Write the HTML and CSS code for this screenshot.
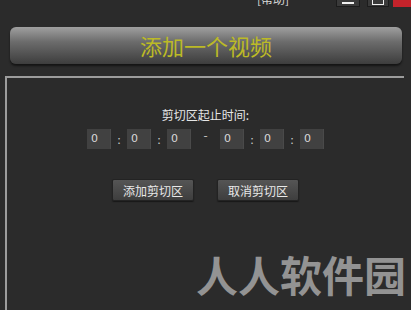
FILE: index.html
```html
<!DOCTYPE html>
<html>
<head>
  <title>添加一个视频</title>
  <link rel="stylesheet" href="styles.css">
</head>
<body>
  <div class="topBar">
    <span class="helpLink">[帮助]</span>
    <div class="winBtn minBtn"><span></span></div>
    <div class="winBtn maxBtn"><span></span></div>
    <div class="winBtn closeBtn"></div>
  </div>

  <div class="addVideo">添加一个视频</div>

  <div class="clipPanel">
    <div class="clipTitle">剪切区起止时间:</div>
    <div class="timeRow">
      <div class="timeBox">0</div>
      <span class="sep">:</span>
      <div class="timeBox">0</div>
      <span class="sep">:</span>
      <div class="timeBox">0</div>
      <span class="dash">-</span>
      <div class="timeBox">0</div>
      <span class="sep">:</span>
      <div class="timeBox">0</div>
      <span class="sep">:</span>
      <div class="timeBox">0</div>
    </div>
    <div class="btnRow">
      <button class="clipBtn">添加剪切区</button>
      <button class="clipBtn">取消剪切区</button>
    </div>
  </div>

  <div class="watermark">人人软件园</div>
</body>
</html>
```

FILE: styles.css
```css
body {
  margin: 0;
  width: 411px;
  height: 310px;
  overflow: hidden;
  position: relative;
  background-color: #2b2b2b;
  font-family: "Noto Sans CJK SC", "Liberation Sans", sans-serif;
  color: #e0e0e0;
}
.topBar {
  display: flex;
  align-items: flex-start;
  height: 27px;
}
.helpLink {
  margin-left: 257px;
  margin-top: -8px;
  font-size: 12px;
  line-height: 14px;
  color: #d8d8d8;
  width: 79px;
}
.winBtn {
  height: 7px;
  box-sizing: border-box;
  position: relative;
}
.minBtn {
  width: 24px;
  background-color: #3a3a3a;
  border: 1px solid #1c1c1c;
  border-top: none;
}
.minBtn span {
  position: absolute;
  left: 5px;
  right: 5px;
  top: 2px;
  height: 2px;
  background-color: #f0f0f0;
}
.maxBtn {
  width: 22px;
  margin-left: 7px;
  background-color: #3a3a3a;
  border: 1px solid #1c1c1c;
  border-top: none;
}
.maxBtn span {
  position: absolute;
  left: 4px;
  right: 4px;
  top: 0;
  height: 4px;
  border: 1px solid #f0f0f0;
  border-top: none;
}
.closeBtn {
  width: 18px;
  margin-left: 4px;
  background-color: #c4232b;
}
.addVideo {
  margin: 0 9px 0 10px;
  height: 37px;
  border-radius: 6px;
  background: linear-gradient(#a0a0a0, #6c6c6c 40%, #3d3d3d);
  box-shadow: 0 2px 2px #151515;
  color: #bcba26;
  font-size: 22px;
  line-height: 37px;
  text-align: center;
}
.clipPanel {
  margin: 12px 7px 0 5px;
  height: 240px;
  border-top: 2px solid #9c9c9c;
  border-left: 2px solid #9c9c9c;
  display: flex;
  flex-direction: column;
  align-items: center;
}
.clipTitle {
  margin-top: 29px;
  font-size: 12px;
  line-height: 16px;
  color: #e6e6e6;
}
.timeRow {
  display: flex;
  align-items: center;
  margin-top: 6px;
  height: 20px;
}
.timeBox {
  width: 24px;
  height: 20px;
  box-sizing: border-box;
  padding-left: 4px;
  background-color: #414141;
  border-right: 1px solid #4a4a4a;
  font-family: "DejaVu Sans", sans-serif;
  font-size: 11px;
  line-height: 20px;
  color: #d8d8d8;
}
.sep {
  width: 16px;
  text-align: center;
  font-size: 11px;
  color: #cfcfcf;
}
.dash {
  width: 29px;
  text-align: center;
  font-size: 12px;
  line-height: 12px;
  color: #cfcfcf;
  margin-top: -8px;
}
.btnRow {
  display: flex;
  gap: 23px;
  margin-top: 30px;
}
.clipBtn {
  width: 82px;
  height: 22px;
  padding: 0;
  background: linear-gradient(#555555, #3e3e3e);
  border: 1px solid #232323;
  border-radius: 2px;
  box-shadow: 0 1px 1px #181818;
  font-family: "Noto Sans CJK SC", sans-serif;
  font-size: 12px;
  color: #e8e8e8;
}
.watermark {
  position: absolute;
  left: 196px;
  top: 250px;
  font-size: 42px;
  line-height: 48px;
  font-weight: bold;
  color: #939393;
}
```
